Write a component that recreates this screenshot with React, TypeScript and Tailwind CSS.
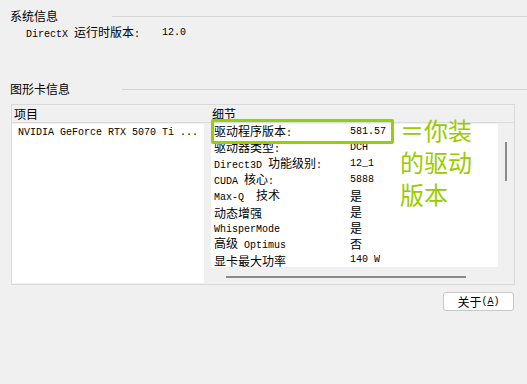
import React from 'react';

const mono = "font-['Liberation_Mono','Noto_Sans_CJK_SC',monospace] text-[10px]";
const cjk = "font-['Noto_Sans_CJK_SC',sans-serif] text-[12px]";

// SimSun-like mix: half-width latin, full-width CJK
const Mixed: React.FC<{ s: string }> = ({ s }) => (
  <>
    {s
      .split(/([\x00-\x7f]+)/)
      .filter(Boolean)
      .map((p, i) =>
        /^[\x00-\x7f]+$/.test(p) ? (
          <span key={i} className={`${mono} whitespace-pre`}>
            {p}
          </span>
        ) : (
          <span key={i} className={cjk}>
            {p}
          </span>
        )
      )}
  </>
);

const rows: [string, string][] = [
  ['驱动程序版本:', '581.57'],
  ['驱动器类型:', 'DCH'],
  ['Direct3D 功能级别:', '12_1'],
  ['CUDA 核心:', '5888'],
  ['Max-Q  技术', '是'],
  ['动态增强', '是'],
  ['WhisperMode', '是'],
  ['高级 Optimus', '否'],
  ['显卡最大功率', '140 W'],
];

const SectionTitle: React.FC<{ title: string; gap: string }> = ({ title, gap }) => (
  <div className="h-[16px] flex items-center pl-[10px]">
    <span className="font-['Noto_Sans_CJK_SC',sans-serif] text-[12px] leading-[16px] text-black">{title}</span>
    <div className={`${gap} flex-1 h-px bg-[#d5d5d5]`} />
  </div>
);

export default function App() {
  return (
    <div className="relative w-[527px] h-[384px] bg-[#f0f0f0] overflow-hidden flex flex-col text-black">
      <div className="mt-[8px]">
        <SectionTitle title="系统信息" gap="ml-[54px]" />
      </div>

      <div className="mt-[1px] h-[16px] flex items-center pl-[26px] leading-[16px]">
        <div className="w-[136px]">
          <Mixed s="DirectX 运行时版本:" />
        </div>
        <Mixed s="12.0" />
      </div>

      <div className="mt-[40px]">
        <SectionTitle title="图形卡信息" gap="ml-[52px]" />
      </div>

      {/* list panel */}
      <div className="mt-[7px] ml-[11px] w-[504px] h-[181px] border border-[#d9d9d9] flex flex-col">
        <div className="h-[18px] border-b border-[#dcdcdc] flex items-center font-['Noto_Sans_CJK_SC',sans-serif] text-[12px] leading-[16px]">
          <span className="pl-[2px] w-[200px]">项目</span>
          <span>细节</span>
        </div>
        <div className="pt-[1px] flex flex-1">
          <div className="w-[192px] bg-white pl-[6px] pt-[1px] h-[159px]">
            <div className="h-[16px] flex items-center leading-[16px]">
              <Mixed s="NVIDIA GeForce RTX 5070 Ti ..." />
            </div>
          </div>
          <div className="ml-[7px] w-[303px] flex flex-col">
            <div className="flex">
              <div className="w-[287px] h-[143px] bg-white overflow-hidden pl-[3px]">
                {rows.map(([k, v]) => (
                  <div key={k} className="h-[16px] flex items-center leading-[16px]">
                    <div className="w-[136px]">
                      <Mixed s={k} />
                    </div>
                    <Mixed s={v} />
                  </div>
                ))}
              </div>
              <div className="w-[16px] pl-[7px] pt-[18px]">
                <div className="w-[2px] h-[39px] bg-[#8a8a8a]" />
              </div>
            </div>
            <div className="pl-[15px] pt-[9px]">
              <div className="w-[240px] h-[2px] bg-[#8a8a8a]" />
            </div>
          </div>
        </div>
      </div>

      <div className="mt-[7px] self-end mr-[13px]">
        <button className="w-[71px] h-[19px] bg-white border border-[#c8c8c8] rounded-[3px] flex items-center justify-center leading-[16px]">
          <Mixed s="关于(" />
          <span className={`${mono} underline`}>A</span>
          <Mixed s=")" />
        </button>
      </div>

      {/* annotation overlay */}
      <div className="absolute left-[211px] top-[119px] w-[183px] h-[25px] border-[3px] border-[#93cf0a] rounded-[2px]" />
      <div className="absolute left-[400px] top-[114px] font-['Noto_Sans_CJK_SC',sans-serif] text-[24px] leading-[32px] text-[#99cc00]">
        <div>＝你装</div>
        <div>的驱动</div>
        <div>版本</div>
      </div>
    </div>
  );
}
